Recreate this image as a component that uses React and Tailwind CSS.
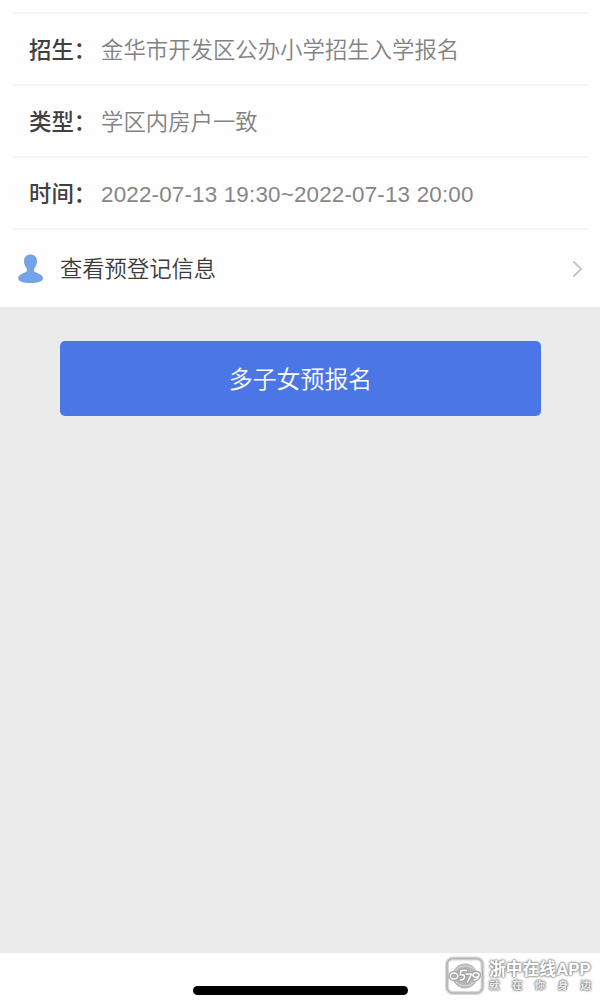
import React from 'react'

const rows = [
    { label: '招生：', value: '金华市开发区公办小学招生入学报名' },
    { label: '类型：', value: '学区内房户一致' },
    { label: '时间：', value: '2022-07-13 19:30~2022-07-13 20:00', numeric: true }
]

function UserIcon() {
    return (
        <svg className="w-[26px] h-[30px] shrink-0" viewBox="0 0 26 30" fill="#74a3e8">
            <path d="M12.500 0.500c4 0 6.500 2.800 6.500 6.700 0 3.500-1.500 5.600-2.700 7.300-.7 1.300-.5 2.700.7 3.400 2.700 1.600 8 2.400 8 6.400 0 3.600-5.800 4.700-12.500 4.700S.2 27.900.2 24.300c0-4 5.100-4.800 7.800-6.400 1.200-.7 1.400-2.100.7-3.400C7.500 12.800 6 10.700 6 7.200 6 3.300 8.500.5 12.500.5z" />
        </svg>
    )
}

function ChevronIcon() {
    return (
        <svg className="w-[11px] h-[18px] shrink-0" viewBox="0 0 11 18" fill="none" stroke="#c4c4c4" strokeWidth="1.8">
            <path d="M1.300 1.500 9.200 9l-7.900 7.500" />
        </svg>
    )
}

function LogoDigits() {
    return (
        <>
            <ellipse cx="10" cy="22" rx="3.800" ry="3" />
            <path d="M22.500 16.500h-5.500l-.8 4.300c4-.6 4.800 1 4 3.200-.5 1.500-2 2-4 2" />
            <path d="M22 20h5.500l-4 8" />
            <path d="M35 21.500c-.8 2.300-6 2.300-6-.5s6.500-3.200 6 0c-.4 2.800-2 4.500-4.800 5" />
        </>
    )
}

function Watermark() {
    return (
        <div className="absolute left-[444px] top-[954px] flex">
            <svg className="w-[42px] h-[42px] shrink-0" viewBox="0 0 42 42">
                <rect x="3" y="4.500" width="35.500" height="34.500" rx="6" fill="#fff" stroke="#d8d8d8" strokeWidth="4" />
                <rect x="3" y="4.500" width="35.500" height="34.500" rx="6" fill="none" stroke="#b5b5b5" strokeWidth="1.600" />
                <circle cx="21" cy="22" r="12.500" fill="#b8b8b8" />
                <path d="M11.500 16.500c5-6 14-6 19-.5M12 28c5 5 13 5 18.500-.5" fill="none" stroke="#dedede" strokeWidth="1" />
                <g fill="none" strokeLinecap="round" strokeLinejoin="round">
                    <g stroke="#a4a4a4" strokeWidth="4">
                        <LogoDigits />
                    </g>
                    <g stroke="#fff" strokeWidth="1.500">
                        <LogoDigits />
                    </g>
                </g>
            </svg>
            <div className="ml-[3px] pt-[6px] text-white font-bold whitespace-nowrap [text-shadow:0_0_1px_#aaa,0_0_2px_#777,0_0_2px_#888,0_0_3px_#999]">
                <div className="text-[16.800px] leading-[20px]">浙中在线APP</div>
                <div className="w-[102px] flex justify-between text-[10.500px] leading-[11px] text-[#e8e8e8]">
                    {'就在你身边'.split('').map((char) => (
                        <span key={char}>{char}</span>
                    ))}
                </div>
            </div>
        </div>
    )
}

export default function App() {
    return (
        <div className="relative w-[600px] h-[1007px] flex flex-col overflow-hidden bg-[#ebebeb] font-['Liberation_Sans','Noto_Sans_CJK_SC',sans-serif]">
            <section className="h-[307px] shrink-0 bg-[#fefefe] pt-3 pl-[13px] pr-3">
                {rows.map((row) => (
                    <div key={row.label} className="h-[72px] flex items-center border-t-2 border-[#f5f5f5] pt-[3px] pl-4 text-[22.400px]">
                        <span className="w-[72px] shrink-0 font-medium text-[#404040]">{row.label}</span>
                        <span className={row.numeric ? 'tracking-[0.180px] text-[#868686] whitespace-nowrap' : 'font-[350] text-[#828282] whitespace-nowrap'}>
                            {row.value}
                        </span>
                    </div>
                ))}
                <div className="h-[79px] flex items-center border-t-2 border-[#f5f5f5] pl-[5px] pr-[5px]">
                    <UserIcon />
                    <span className="ml-4 pt-[2px] grow font-[350] text-[22.300px] text-[#3a3a3a]">查看预登记信息</span>
                    <ChevronIcon />
                </div>
            </section>

            <main className="grow px-[60px] pt-[34px]">
                <button className="w-[481px] h-[75px] rounded-[5px] bg-[#4b77e6] pt-[2px] text-[23.900px] font-[350] text-white">
                    多子女预报名
                </button>
            </main>

            <footer className="h-[54px] shrink-0 flex justify-center bg-[#fefefe] pt-[33px]">
                <div className="w-[215px] h-[9px] rounded-full bg-black" />
            </footer>
            <Watermark />
        </div>
    )
}
